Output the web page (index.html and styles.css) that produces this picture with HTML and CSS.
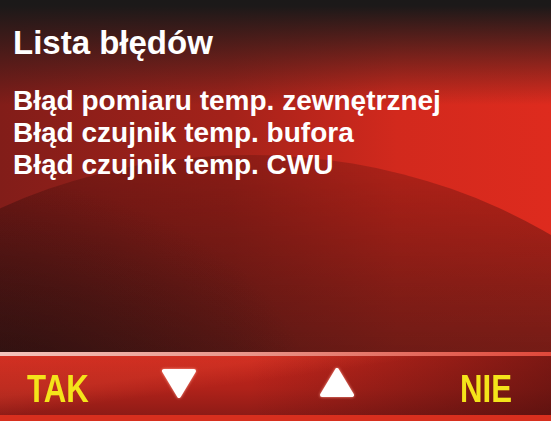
FILE: index.html
```html
<!DOCTYPE html>
<html lang="pl">
<head>
    <meta charset="UTF-8">
    <meta name="viewport" content="width=device-width, initial-scale=1.0">
    <title>Lista błędów</title>
    <link rel="stylesheet" href="styles.css">
</head>
<body>
    <div class="screen">
        <div class="content">
            <h1 class="title">Lista błędów</h1>
            <ul class="errors">
                <li>Błąd pomiaru temp. zewnętrznej</li>
                <li>Błąd czujnik temp. bufora</li>
                <li>Błąd czujnik temp. CWU</li>
            </ul>
        </div>

        <div class="bar">
            <span class="key key-yes">TAK</span>
            <svg class="arrow arrow-down" viewBox="0 0 40 34">
                <polygon points="5,5 35,5 20,30" />
            </svg>
            <svg class="arrow arrow-up" viewBox="0 0 40 34">
                <polygon points="20,4 35,29 5,29" />
            </svg>
            <span class="key key-no">NIE</span>
        </div>
    </div>
</body>
</html>
```

FILE: styles.css
```css
body {
    margin: 0;
    font-family: 'Liberation Sans', Arial, sans-serif;
    background: #1b1919;
}

.screen {
    position: relative;
    width: 551px;
    height: 421px;
    overflow: hidden;
    display: flex;
    flex-direction: column;
    background:
        linear-gradient(to bottom, #1b1919 0, #1c1919 6px, rgba(28, 25, 25, 0) 105px),
        linear-gradient(to right, #821d19 0%, #a4221a 42%, #d2291d 72%, #de2b1e 100%);
}

/* darker swoosh under the list, shades whatever lies below it */
.screen::before {
    content: "";
    position: absolute;
    left: -276px;
    top: 155px;
    width: 1052px;
    height: 890px;
    border-radius: 50%;
    background:
        radial-gradient(360px 250px at 236px 270px, rgba(24, 14, 14, 0.7), rgba(24, 14, 14, 0)),
        linear-gradient(to bottom, rgba(40, 8, 8, 0.2) 0, rgba(40, 8, 8, 0.3) 6%, rgba(34, 14, 14, 0.45) 15%, rgba(30, 16, 16, 0.55) 22%);
}

.content {
    position: relative;
    flex: 1;
    padding: 26px 13px 0;
    color: #fff;
}

.title {
    margin: 0;
    font-size: 33px;
    line-height: 1;
    font-weight: bold;
}

.errors {
    list-style: none;
    margin: 26px 0 0;
    padding: 0;
    font-size: 28px;
    font-weight: bold;
    line-height: 32px;
}

.bar {
    position: relative;
    height: 59px;
    display: flex;
    align-items: center;
    padding: 0 39px 0 27px;
    border-top: 4px solid #e8a49a;
    border-bottom: 6px solid #d82f1e;
    background:
        linear-gradient(172deg, rgba(255, 90, 60, 0.18) 30%, rgba(255, 90, 60, 0) 45%),
        linear-gradient(to right, rgba(50, 10, 10, 0) 45%, rgba(50, 10, 10, 0.5) 100%),
        linear-gradient(to bottom, #c8261c 0, #b0221a 55%, #8e1b16 100%);
}

/* light edge on top of the key bar */
.bar::before {
    content: "";
    position: absolute;
    left: 0;
    right: 0;
    top: -4px;
    height: 4px;
    background: linear-gradient(to right, #f2c4bc 0%, #e8958a 45%, #e0483a 100%);
}

.key {
    font-weight: bold;
    font-size: 39px;
    line-height: 1;
    color: #f4e41a;
    padding-top: 6px;
    transform: scaleX(0.8);
}

.key-yes {
    transform-origin: left center;
}

.key-no {
    margin-left: auto;
    transform-origin: right center;
}

.arrow {
    width: 40px;
    height: 34px;
    filter: drop-shadow(0 0 1.5px #ff9c8c);
}

.arrow polygon {
    fill: #fff;
    stroke: #fff;
    stroke-width: 4;
    stroke-linejoin: round;
}

.arrow-down {
    margin-left: 55px;
    margin-top: -5px;
}

.arrow-up {
    margin-left: 118px;
    margin-top: -6px;
}
```
